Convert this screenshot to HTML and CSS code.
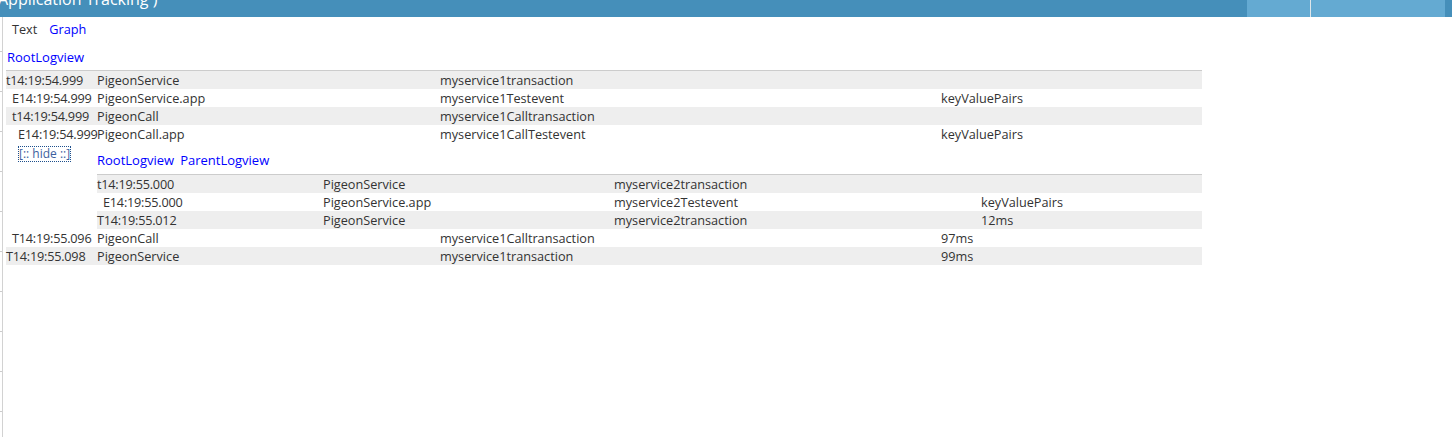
FILE: index.html
```html
<!DOCTYPE html>
<html>
<head>
<meta charset="utf-8">
<title>Application Tracking</title>
<link rel="stylesheet" href="styles.css">
</head>
<body>
<header class="topbar">
  <div class="title">Application Tracking )</div>
  <div class="tab tab-a"></div>
  <div class="tab-sep"></div>
  <div class="tab tab-b"></div>
</header>
<div class="main">
  <div class="ticks"></div>
  <div class="content">
    <div class="views"><span class="view-current">Text</span><a class="link" href="#">Graph</a></div>
    <div class="crumbs"><a class="link" href="#">RootLogview</a></div>
    <table class="log outer">
      <colgroup><col class="oc1"><col class="oc2"><col class="oc3"><col class="oc4"></colgroup>
      <tr class="odd"><td class="time d0">t14:19:54.999</td><td>PigeonService</td><td>myservice1transaction</td><td></td></tr>
      <tr><td class="time d1">E14:19:54.999</td><td>PigeonService.app</td><td>myservice1Testevent</td><td>keyValuePairs</td></tr>
      <tr class="odd"><td class="time d1">t14:19:54.999</td><td>PigeonCall</td><td>myservice1Calltransaction</td><td></td></tr>
      <tr><td class="time d2">E14:19:54.999</td><td>PigeonCall.app</td><td>myservice1CallTestevent</td><td>keyValuePairs</td></tr>
      <tr class="nested-row">
        <td class="hide-cell"><a class="hide" href="#">[:: hide ::]</a></td>
        <td colspan="3" class="nested-cell">
          <div class="crumbs nested-crumbs"><a class="link" href="#">RootLogview</a><a class="link" href="#">ParentLogview</a></div>
          <table class="log inner">
            <colgroup><col class="ic1"><col class="ic2"><col class="ic3"><col class="ic4"></colgroup>
            <tr class="odd"><td class="time d0">t14:19:55.000</td><td>PigeonService</td><td>myservice2transaction</td><td></td></tr>
            <tr><td class="time d1">E14:19:55.000</td><td>PigeonService.app</td><td>myservice2Testevent</td><td>keyValuePairs</td></tr>
            <tr class="odd"><td class="time d0">T14:19:55.012</td><td>PigeonService</td><td>myservice2transaction</td><td>12ms</td></tr>
          </table>
        </td>
      </tr>
      <tr><td class="time d1">T14:19:55.096</td><td>PigeonCall</td><td>myservice1Calltransaction</td><td>97ms</td></tr>
      <tr class="odd"><td class="time d0">T14:19:55.098</td><td>PigeonService</td><td>myservice1transaction</td><td>99ms</td></tr>
    </table>
  </div>
</div>
</body>
</html>
```

FILE: styles.css
```css
html, body {
  margin: 0;
  padding: 0;
  background: #ffffff;
}
body {
  font-family: "Open Sans", "Liberation Sans", sans-serif;
  font-size: 12.7px;
  color: #333333;
}
.topbar {
  display: flex;
  height: 17px;
  background: #458fba;
  overflow: hidden;
  padding-right: 7px;
}
.title {
  flex: 1;
  color: #ffffff;
  font-size: 16px;
  line-height: 16px;
  margin-top: -9px;
  margin-left: -2px;
  white-space: nowrap;
}
.tab {
  background: #64aad2;
  height: 17px;
}
.tab-a { width: 63px; }
.tab-b { width: 134px; }
.tab-sep {
  width: 1px;
  background: #dfe6ea;
}
.main {
  display: flex;
  min-height: 420px;
}
.ticks {
  width: 2px;
  background: repeating-linear-gradient(to bottom, transparent 0, transparent 34px, #cccccc 34px, #cccccc 35px, transparent 35px, transparent 40px);
}
.content {
  flex: 1;
  border-left: 1px solid #d2d2d2;
  padding: 3px 0 0 3px;
}
.views {
  line-height: 18px;
  padding-left: 6px;
}
.view-current {
  margin-right: 12px;
}
.link {
  color: #0000ff;
  text-decoration: none;
}
.crumbs {
  line-height: 18px;
  margin-top: 10px;
  margin-left: 1px;
}
.crumbs .link {
  font-size: 13px;
}
.crumbs .link + .link {
  margin-left: 6px;
}
.log {
  border-collapse: collapse;
  table-layout: fixed;
  border-top: 1px solid #cccccc;
}
.log td {
  padding: 0;
  height: 18px;
  line-height: 18px;
  white-space: nowrap;
  vertical-align: middle;
}
.log td.time {
  letter-spacing: -0.22px;
}
.log tr.odd td {
  background: #eeeeee;
}
.outer {
  width: 1196px;
  margin-top: 4px;
}
.oc1 { width: 91px; }
.oc2 { width: 343px; }
.oc3 { width: 501px; }
.oc4 { width: 261px; }
.inner {
  width: 1105px;
}
.ic1 { width: 226px; }
.ic2 { width: 291px; }
.ic3 { width: 367px; }
.ic4 { width: 221px; }
.log td.d1 { padding-left: 6px; }
.log td.d2 { padding-left: 12px; }
.log td.hide-cell {
  vertical-align: top;
  padding-left: 13px;
  padding-top: 1px;
}
.hide {
  display: inline-block;
  font-size: 12px;
  color: #3d5f9e;
  text-decoration: none;
  line-height: 14px;
  outline: 1px dotted #1d4f8c;
  outline-offset: 0;
  padding: 0;
}
.log td.nested-cell {
  vertical-align: top;
}
.nested-crumbs {
  margin-top: 8px;
  margin-bottom: 5px;
  margin-left: 0;
}
```
